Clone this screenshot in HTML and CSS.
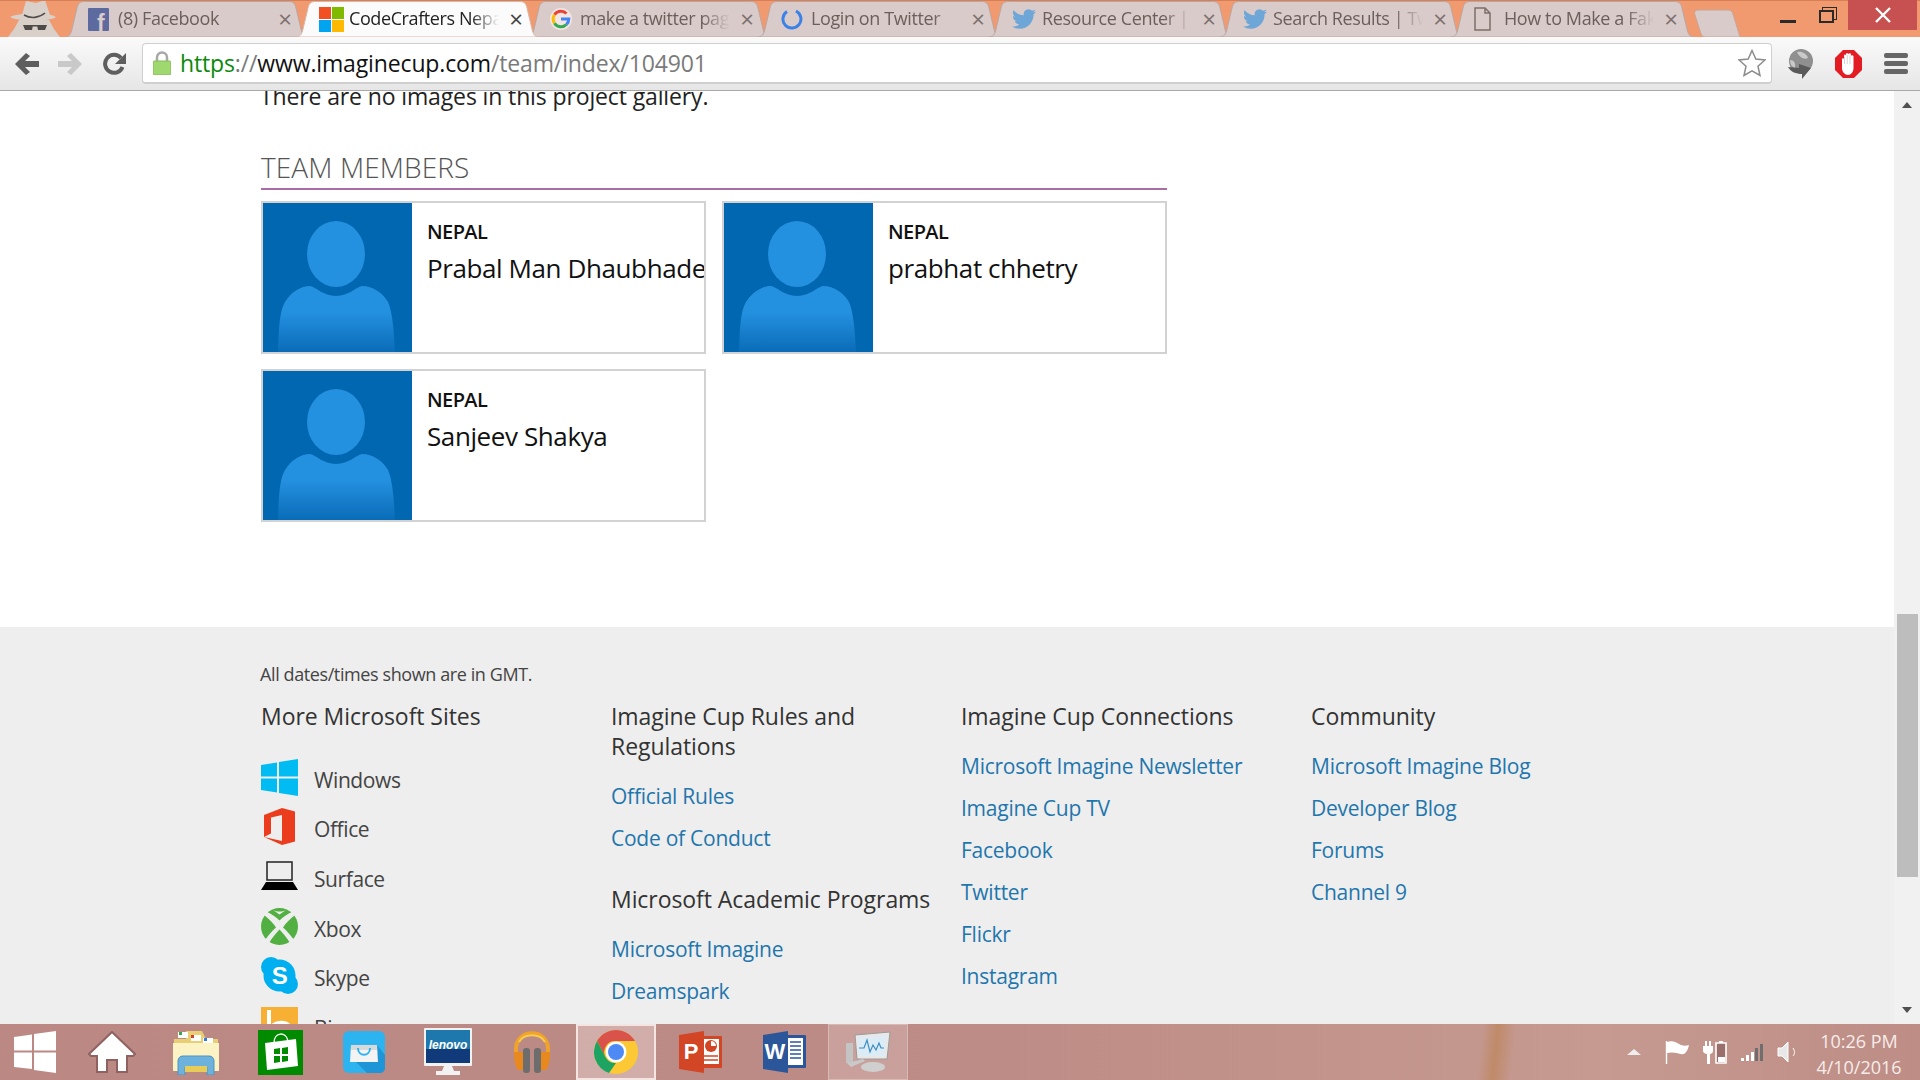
FILE: index.html
```html
<!DOCTYPE html>
<html lang="en">

<head>
    <meta charset="UTF-8">
    <title>CodeCrafters Nepal</title>
    <link rel="stylesheet" href="styles.css">
</head>

<body>
    <svg class="defs">
        <symbol id="tab-shape" viewBox="0 0 243 36">
            <path d="M0 36C4 36 6 33 7 28L12 7C13 2 15 .5 20 .5H223C228 .5 230 2 231 7L236 28C237 33 239 36 243 36Z"/>
        </symbol>
        <symbol id="bird" viewBox="0 0 24 24">
            <path fill="#6ea6d8" d="M23.95 4.57a10 10 0 01-2.82.78 4.96 4.96 0 002.16-2.73c-.95.56-2 .96-3.13 1.19a4.92 4.92 0 00-8.38 4.48C7.69 8.1 4.07 6.13 1.64 3.16a4.82 4.82 0 00-.67 2.48c0 1.71.87 3.21 2.19 4.1a4.9 4.9 0 01-2.23-.62v.06a4.92 4.92 0 003.95 4.83 5 5 0 01-2.21.08 4.94 4.94 0 004.6 3.42 9.87 9.87 0 01-6.1 2.1c-.39 0-.78-.02-1.17-.06a14 14 0 007.56 2.2c9.05 0 14-7.49 14-13.98 0-.21 0-.42-.02-.63A9.94 9.94 0 0024 4.59z"/>
        </symbol>
    </svg>

    <div class="screen">
        <header class="frame">
            <div class="spy">
                <svg width="54" height="37" viewBox="0 0 54 37">
                    <path fill="#d9d0ca" d="M15 15L19 1 29 3 38 0 43 15Z"/>
                    <path fill="#d9d0ca" d="M3 17C14 12 40 12 49 17 42 22 12 22 3 17Z"/>
                    <path fill="#d9d0ca" d="M12 20H42L47 29 53 37H1L7 29Z"/>
                    <path fill="#4e4a48" d="M16 25H26L25 30H18ZM30 25H40L38 30H31ZM25 25H31V26.500H25Z"/>
                    <path fill="none" stroke="#4e4a48" stroke-width="1.600" d="M17 15C24 19 32 18 38 13"/>
                </svg>
            </div>
            <div class="tabs">
                <div class="tab">
                    <svg class="tab-bg"><use href="#tab-shape"/></svg>
                    <svg class="favicon" width="21" height="23" viewBox="0 0 21 23">
                        <rect width="21" height="23" rx="1" fill="#5c6aa0"/>
                        <text class="fb-f" x="9" y="23">f</text>
                    </svg>
                    <span class="tab-title">(8) Facebook</span>
                    <span class="tab-close">×</span>
                </div>
                <div class="tab tab-active">
                    <svg class="tab-bg"><use href="#tab-shape"/></svg>
                    <svg class="favicon" width="25" height="25" viewBox="0 0 25 25">
                        <rect width="12" height="12" fill="#f25022"/>
                        <rect x="13" width="12" height="12" fill="#7fba00"/>
                        <rect y="13" width="12" height="12" fill="#00a4ef"/>
                        <rect x="13" y="13" width="12" height="12" fill="#ffb900"/>
                    </svg>
                    <span class="tab-title">CodeCrafters Nepal</span>
                    <span class="tab-close">×</span>
                </div>
                <div class="tab">
                    <svg class="tab-bg"><use href="#tab-shape"/></svg>
                    <svg class="favicon" width="22" height="22" viewBox="0 0 22 22">
                        <circle cx="11" cy="11" r="11" fill="#f3e6e2"/>
                        <path fill="none" stroke="#ea4335" stroke-width="3" d="M16.500 5.500A7.800 7.800 0 004.500 6.800"/>
                        <path fill="none" stroke="#fbbc05" stroke-width="3" d="M4.500 6.800A7.800 7.800 0 004.500 15.200"/>
                        <path fill="none" stroke="#34a853" stroke-width="3" d="M4.500 15.200A7.800 7.800 0 0016.500 16.500"/>
                        <path fill="none" stroke="#4285f4" stroke-width="3" d="M16.500 16.500A7.800 7.800 0 0018.800 11H11"/>
                    </svg>
                    <span class="tab-title">make a twitter page</span>
                    <span class="tab-close">×</span>
                </div>
                <div class="tab">
                    <svg class="tab-bg"><use href="#tab-shape"/></svg>
                    <svg class="favicon" width="22" height="22" viewBox="0 0 22 22">
                        <path fill="none" stroke="#3b82e8" stroke-width="3" d="M6 3.500A9 9 0 1 0 15 3"/>
                    </svg>
                    <span class="tab-title">Login on Twitter</span>
                    <span class="tab-close">×</span>
                </div>
                <div class="tab">
                    <svg class="tab-bg"><use href="#tab-shape"/></svg>
                    <svg class="favicon" width="24" height="24"><use href="#bird"/></svg>
                    <span class="tab-title">Resource Center | Twitter</span>
                    <span class="tab-close">×</span>
                </div>
                <div class="tab">
                    <svg class="tab-bg"><use href="#tab-shape"/></svg>
                    <svg class="favicon" width="24" height="24"><use href="#bird"/></svg>
                    <span class="tab-title">Search Results | Twitter</span>
                    <span class="tab-close">×</span>
                </div>
                <div class="tab">
                    <svg class="tab-bg"><use href="#tab-shape"/></svg>
                    <svg class="favicon" width="17" height="24" viewBox="0 0 17 24">
                        <path fill="none" stroke="#7d6f6a" stroke-width="1.500" d="M1 1H11L16 6V23H1ZM11 1V6H16"/>
                    </svg>
                    <span class="tab-title">How to Make a Fake</span>
                    <span class="tab-close">×</span>
                </div>
                <div class="new-tab">
                    <svg width="47" height="29" viewBox="0 0 47 29">
                        <path fill="#d9cbc9" stroke="#c9a596" d="M1 6C0 3 1 1 5 1H33C37 1 38 2 39 5L46 28H12C9 28 8 27 7 25Z"/>
                    </svg>
                </div>
            </div>
            <div class="win-btns">
                <span class="win-min"></span>
                <span class="win-restore"></span>
                <span class="win-close">
                    <svg width="16" height="16" viewBox="0 0 16 16">
                        <path stroke="#fff" stroke-width="2.400" d="M1 1L15 15M15 1L1 15"/>
                    </svg>
                </span>
            </div>
        </header>

        <div class="toolbar">
            <svg class="nav-btn nav-back" width="26" height="24" viewBox="0 0 26 24">
                <path fill="#5e5e5e" d="M12 1L16 4 11 9H25V15H11L16 20 12 23 1 12Z"/>
            </svg>
            <svg class="nav-btn nav-forward" width="26" height="24" viewBox="0 0 26 24">
                <path fill="#c9c9c9" d="M14 1L10 4 15 9H1V15H15L10 20 14 23 25 12Z"/>
            </svg>
            <svg class="nav-btn" width="24" height="24" viewBox="0 0 24 24">
                <path fill="none" stroke="#5e5e5e" stroke-width="4" d="M19.500 15A9 9 0 1 1 18 6"/>
                <path fill="#5e5e5e" d="M23 1V12H12Z"/>
            </svg>
            <div class="omnibox">
                <svg class="lock" width="18" height="24" viewBox="0 0 18 24">
                    <path fill="none" stroke="#a8a8a8" stroke-width="2.500" d="M4 11V6.500A5 5 0 0114 6.500V11"/>
                    <rect y="10" width="18" height="14" rx="1.500" fill="#9fd86f" stroke="#86bb5a"/>
                </svg>
                <span class="url"><span class="url-https">https</span><span class="url-dim">://</span>www.imaginecup.com<span class="url-dim">/team/index/104901</span></span>
                <svg width="28" height="28" viewBox="0 0 28 28">
                    <path fill="#fff" stroke="#8c8c8c" stroke-width="1.500" d="M14 1.500L17.800 10 27 11 20 17.200 22 26.500 14 21.800 6 26.500 8 17.200 1 11 10.200 10Z"/>
                </svg>
            </div>
            <svg class="ext-globe" width="30" height="30" viewBox="0 0 30 30">
                <circle cx="16" cy="12" r="12" fill="#8f8f8f"/>
                <path fill="#c9c9c9" d="M12 3C17 2 22 5 23 9 19 11 14 8 12 3ZM5 11C9 11 11 14 10 19 7 18 5 15 5 11Z"/>
                <path fill="#5a5a5a" d="M3 18L14 19V15L26 19 17 30V25C11 25 6 23 3 18Z"/>
            </svg>
            <svg class="ext-block" width="27" height="28" viewBox="0 0 27 28">
                <path fill="#e31b23" d="M8 0H19L27 8V20L19 28H8L0 20V8Z"/>
                <path fill="#fff" d="M7 9C7 8 9 8 9 9V6C9 4 11 4 11 6V4C11 3 13.500 3 13.500 4.500V4C13.500 3 16 3 16 4.500V6C16 5 18.500 5 18.500 6.500V18C18.500 22 16 25 13 25 10 25 7 22 7 18Z"/>
                <path stroke="#c9c9c9" stroke-width="0.800" d="M9.500 7V14M12.300 5V14M15 5V14"/>
            </svg>
            <div class="menu-btn"><span></span><span></span><span></span></div>
        </div>

        <div class="viewport">
            <main class="page">
                <section class="content">
                    <p class="gallery-note">There are no images in this project gallery.</p>
                    <h2 class="section-title">TEAM MEMBERS</h2>
                    <div class="members">
                        <div class="member">
                            <svg class="avatar" viewBox="0 0 149 149">
                                <defs>
                                    <linearGradient id="body-fade" x1="0" y1="0" x2="0" y2="1">
                                        <stop offset="0.400" stop-color="#2490e0"/>
                                        <stop offset="1" stop-color="#0a6cb8"/>
                                    </linearGradient>
                                </defs>
                                <ellipse cx="73" cy="51" rx="29" ry="33" fill="#2490e0"/>
                                <path fill="url(#body-fade)" d="M15 149C16 120 17 108 22 99 28 89 38 83 47 83 53 84 60 93 73 93 86 93 93 84 99 83 110 83 120 90 125 99 129 108 131 125 132 149Z"/>
                            </svg>
                            <div class="member-info">
                                <div class="member-country">NEPAL</div>
                                <div class="member-name">Prabal Man Dhaubhade</div>
                            </div>
                        </div>
                        <div class="member">
                            <svg class="avatar" viewBox="0 0 149 149">
                                <ellipse cx="73" cy="51" rx="29" ry="33" fill="#2490e0"/>
                                <path fill="url(#body-fade)" d="M15 149C16 120 17 108 22 99 28 89 38 83 47 83 53 84 60 93 73 93 86 93 93 84 99 83 110 83 120 90 125 99 129 108 131 125 132 149Z"/>
                            </svg>
                            <div class="member-info">
                                <div class="member-country">NEPAL</div>
                                <div class="member-name">prabhat chhetry</div>
                            </div>
                        </div>
                        <div class="member">
                            <svg class="avatar" viewBox="0 0 149 149">
                                <ellipse cx="73" cy="51" rx="29" ry="33" fill="#2490e0"/>
                                <path fill="url(#body-fade)" d="M15 149C16 120 17 108 22 99 28 89 38 83 47 83 53 84 60 93 73 93 86 93 93 84 99 83 110 83 120 90 125 99 129 108 131 125 132 149Z"/>
                            </svg>
                            <div class="member-info">
                                <div class="member-country">NEPAL</div>
                                <div class="member-name">Sanjeev Shakya</div>
                            </div>
                        </div>
                    </div>
                </section>

                <footer class="site-footer">
                    <p class="tz-note">All dates/times shown are in GMT.</p>
                    <div class="footer-cols">
                        <div class="footer-col">
                            <h3>More Microsoft Sites</h3>
                            <ul class="site-list">
                                <li>
                                    <svg width="37" height="37" viewBox="0 0 37 37">
                                        <path fill="#00bcf2" d="M0 6L16 3.500V17.500H0ZM18 3L37 0V17.500H18ZM0 19.500H16V33.500L0 31ZM18 19.500H37V37L18 34Z"/>
                                    </svg>
                                    Windows
                                </li>
                                <li>
                                    <svg width="37" height="37" viewBox="0 0 37 37">
                                        <path fill="#eb3c1e" fill-rule="evenodd" d="M3 29V7L21 0 34 3.500V33.500L21 37 3 29ZM21 33V7L10 9.500V25.500L3 29Z"/>
                                    </svg>
                                    Office
                                </li>
                                <li>
                                    <svg width="37" height="30" viewBox="0 0 37 30">
                                        <rect x="6" y="1" width="25" height="18" fill="none" stroke="#222" stroke-width="1.500"/>
                                        <path fill="#000" d="M5 21H32L37 29H0Z"/>
                                    </svg>
                                    Surface
                                </li>
                                <li>
                                    <svg width="37" height="37" viewBox="0 0 37 37">
                                        <circle cx="18.500" cy="18.500" r="18.500" fill="#52b043"/>
                                        <path fill="#eeeeee" d="M5 3.500C11 6 15 9 18.500 12.500 22 9 26 6 32 3.500L34 7C28 12 24 16 22 19.500 26 23 30 28 33 32L29 35C26 30 22 25 18.500 21.500 15 25 11 30 8 35L4 32C7 28 11 23 15 19.500 13 16 9 12 3 7Z"/>
                                        <path fill="#eeeeee" d="M12 2C16 4 21 4 25 2L18.500 6.500Z"/>
                                    </svg>
                                    Xbox
                                </li>
                                <li>
                                    <svg width="37" height="37" viewBox="0 0 37 37">
                                        <circle cx="10" cy="10" r="10" fill="#00aff0"/>
                                        <circle cx="27" cy="27" r="10" fill="#00aff0"/>
                                        <circle cx="18.500" cy="18.500" r="16" fill="#00aff0"/>
                                        <text class="skype-s" x="18.500" y="27">S</text>
                                    </svg>
                                    Skype
                                </li>
                                <li>
                                    <svg width="37" height="37" viewBox="0 0 37 37">
                                        <rect width="37" height="37" fill="#f7b033"/>
                                        <path fill="none" stroke="#fff" stroke-width="4" d="M8 3V24C14 12 30 14 30 24"/>
                                    </svg>
                                    Bing
                                </li>
                            </ul>
                        </div>
                        <div class="footer-col">
                            <h3>Imagine Cup Rules and Regulations</h3>
                            <ul class="link-list">
                                <li><a href="#">Official Rules</a></li>
                                <li><a href="#">Code of Conduct</a></li>
                            </ul>
                            <h3 class="footer-sub">Microsoft Academic Programs</h3>
                            <ul class="link-list">
                                <li><a href="#">Microsoft Imagine</a></li>
                                <li><a href="#">Dreamspark</a></li>
                            </ul>
                        </div>
                        <div class="footer-col">
                            <h3>Imagine Cup Connections</h3>
                            <ul class="link-list">
                                <li><a href="#">Microsoft Imagine Newsletter</a></li>
                                <li><a href="#">Imagine Cup TV</a></li>
                                <li><a href="#">Facebook</a></li>
                                <li><a href="#">Twitter</a></li>
                                <li><a href="#">Flickr</a></li>
                                <li><a href="#">Instagram</a></li>
                            </ul>
                        </div>
                        <div class="footer-col">
                            <h3>Community</h3>
                            <ul class="link-list">
                                <li><a href="#">Microsoft Imagine Blog</a></li>
                                <li><a href="#">Developer Blog</a></li>
                                <li><a href="#">Forums</a></li>
                                <li><a href="#">Channel 9</a></li>
                            </ul>
                        </div>
                    </div>
                </footer>
            </main>
            <div class="scrollbar">
                <span class="arrow-up"></span>
                <span class="thumb"></span>
                <span class="arrow-down"></span>
            </div>
        </div>

        <div class="taskbar">
            <div class="task-start">
                <svg width="42" height="42" viewBox="0 0 42 42">
                    <path fill="#fff" d="M0 6L18 3.500V19.500H0ZM20 3L42 0V19.500H20ZM0 21.500H18V38L0 36ZM20 21.500H42V42L20 39Z"/>
                </svg>
            </div>
            <div class="task-slot">
                <svg width="48" height="42" viewBox="0 0 48 42">
                    <path fill="#fff" stroke="#8e6260" stroke-width="2" d="M24 1L47 23 45 25H39V41H29V29H19V41H9V25H3L1 23Z"/>
                </svg>
            </div>
            <div class="task-slot">
                <svg width="48" height="46" viewBox="0 0 48 46">
                    <path fill="#e8cf76" d="M2 10H14V2H30L34 10H46V40H2Z"/>
                    <path fill="#fbf3c4" d="M1 14H47V42H1Z"/>
                    <rect x="6" y="3" width="10" height="6" fill="#fff"/>
                    <rect x="19" y="6" width="10" height="6" fill="#fff"/>
                    <rect x="31" y="9" width="10" height="5" fill="#fff"/>
                    <rect x="7" y="3" width="3" height="3" fill="#3aa64a"/>
                    <rect x="19" y="6" width="3" height="3" fill="#d84032"/>
                    <rect x="32" y="9" width="3" height="3" fill="#2f7fd8"/>
                    <path fill="#6cb2dc" stroke="#4c93c2" d="M6 46V32C6 29 8 27 11 27H37C40 27 42 29 42 32V46H35V38H13V46Z"/>
                    <rect x="13" y="37" width="22" height="6" fill="#e7cc58"/>
                </svg>
            </div>
            <div class="task-slot">
                <svg width="45" height="45" viewBox="0 0 45 45">
                    <rect width="45" height="45" fill="#008a00"/>
                    <path fill="#fff" d="M7 13L38 9 40 36 9 40Z"/>
                    <path fill="none" stroke="#fff" stroke-width="1.500" d="M16 13C16 2 28 1 30 11"/>
                    <path fill="#008a00" d="M16 19L22 18V24H16ZM24 18L30 17V24H24ZM16 26H22V32L16 33ZM24 26H30V31L24 32Z"/>
                </svg>
            </div>
            <div class="task-slot">
                <svg width="42" height="42" viewBox="0 0 42 42">
                    <rect width="42" height="42" rx="6" fill="#2db4f0"/>
                    <path fill="#1d95d6" d="M34 14L42 24V36C42 40 40 42 36 42H24L8 26Z"/>
                    <path fill="#f3f3f3" d="M8 14H34L35 31H7Z"/>
                    <path fill="#d9d9d9" d="M8 14H34V19H8Z"/>
                    <path fill="none" stroke="#2db4f0" stroke-width="2" d="M15 17C15 26 27 26 27 17"/>
                </svg>
            </div>
            <div class="task-slot">
                <svg width="48" height="48" viewBox="0 0 48 48">
                    <rect width="48" height="38" rx="1" fill="#f2f2f2"/>
                    <rect x="2" y="2" width="44" height="33" fill="#103a7a"/>
                    <rect x="2" y="2" width="44" height="19" fill="#1f78ad"/>
                    <text class="lenovo" x="24" y="21">lenovo</text>
                    <path fill="#f2f2f2" d="M20 38H28L30 43H36V47H12V43H18Z"/>
                </svg>
            </div>
            <div class="task-slot">
                <svg width="40" height="44" viewBox="0 0 40 44">
                    <path fill="none" stroke="#f0a32a" stroke-width="4" d="M4 28V19C4 -2 36 -2 36 19V28"/>
                    <path fill="none" stroke="#f7cc4f" stroke-width="2" d="M7 12C12 3 28 3 33 12"/>
                    <path fill="#e8891f" d="M2 22H11V40H6C3 36 2 30 2 22ZM38 22H29V40H34C37 36 38 30 38 22Z"/>
                    <rect x="11" y="18" width="7" height="25" rx="3" fill="#6d6d6d"/>
                    <rect x="22" y="18" width="7" height="25" rx="3" fill="#6d6d6d"/>
                </svg>
            </div>
            <div class="task-slot task-open">
                <svg width="44" height="44" viewBox="0 0 44 44">
                    <circle cx="22" cy="22" r="22" fill="#fcc934"/>
                    <path fill="#d9534a" d="M3 11A22 22 0 0141 11H22A11 11 0 0012 28Z"/>
                    <path fill="#1da462" d="M3 11L12 28A11 11 0 0022 33L15 43A22 22 0 013 11Z"/>
                    <circle cx="22" cy="22" r="10.500" fill="#fff"/>
                    <circle cx="22" cy="22" r="8" fill="#4e8af4"/>
                </svg>
            </div>
            <div class="task-slot">
                <svg width="43" height="42" viewBox="0 0 43 42">
                    <rect x="22" y="5" width="21" height="32" rx="1" fill="#d24625"/>
                    <rect x="24" y="8" width="16" height="25" fill="#fff"/>
                    <circle cx="32" cy="15" r="6" fill="#d24625"/>
                    <path fill="#fff" d="M32 10V15H37A5 5 0 0032 10Z"/>
                    <path stroke="#d24625" stroke-width="1.500" d="M25 25H39M25 29H39"/>
                    <path fill="#d24625" d="M0 4L25 0V42L0 38Z"/>
                    <text class="office-letter" x="12" y="28">P</text>
                </svg>
            </div>
            <div class="task-slot">
                <svg width="43" height="42" viewBox="0 0 43 42">
                    <rect x="22" y="4" width="21" height="33" rx="1" fill="#2b579a"/>
                    <rect x="24" y="7" width="16" height="27" fill="#fff"/>
                    <path stroke="#2b579a" stroke-width="1.500" d="M27 11H38M27 15H38M27 19H38M27 23H38M27 27H38"/>
                    <path fill="#2b579a" d="M0 4L25 0V42L0 38Z"/>
                    <text class="office-letter" x="12" y="28">W</text>
                </svg>
            </div>
            <div class="task-slot task-open task-open-dim">
                <svg width="46" height="42" viewBox="0 0 46 42">
                    <rect x="1" y="12" width="7" height="20" fill="#c4c4c4"/>
                    <path fill="#e8e8e8" stroke="#9a9a9a" d="M10 4L45 1 42 28 12 28Z"/>
                    <path fill="#dcecf6" d="M13 7L41 5 39 25 14 25Z"/>
                    <path fill="none" stroke="#3c8dc4" stroke-width="1.200" d="M14 17H19L22 9 25 21 28 14 31 19 34 12 36 17H39"/>
                    <ellipse cx="28" cy="36" rx="12" ry="5" fill="#cfcfcf"/>
                    <path fill="#c9c9c9" d="M2 32L18 28 20 30 6 36Z"/>
                </svg>
            </div>
            <div class="tray">
                <span class="tray-chevron"></span>
                <svg width="24" height="24" viewBox="0 0 24 24">
                    <path fill="none" stroke="#fff" stroke-width="1.400" d="M1.500 24V1"/>
                    <path fill="#fff" d="M2 2C8 0 12 3 16 5 19 6 21 6 24 5 23 9 22 12 19 14 15 15 10 11 2 13Z"/>
                </svg>
                <svg width="24" height="24" viewBox="0 0 24 24">
                    <path fill="#fff" d="M2 1H4V6H6V1H8V6H10V11C10 13 8 14 7 14V24H4V14C3 14 0 13 0 11V6H2Z"/>
                    <path fill="#9a6e6a" stroke="#fff" stroke-width="1.600" d="M13 3H23V23H13Z"/>
                    <rect x="15" y="17" width="7" height="5" fill="#fff"/>
                    <rect x="16" y="1" width="4" height="2" fill="#fff"/>
                </svg>
                <svg width="22" height="18" viewBox="0 0 22 18">
                    <path fill="#fff" d="M0 15H3V18H0ZM5 12H8V18H5ZM10 9H13V18H10Z"/>
                    <path fill="#6e6e6e" d="M14 5H17V18H14Z"/>
                    <path fill="#6e6e6e" d="M19 1H22V18H19Z"/>
                </svg>
                <svg width="20" height="22" viewBox="0 0 20 22">
                    <path fill="#e8e8e8" stroke="#fff" d="M1 7H5L11 1V21L5 15H1Z"/>
                    <path fill="none" stroke="#fff" d="M16 7C18 10 18 13 16 15"/>
                </svg>
                <div class="clock">
                    <span>10:26 PM</span>
                    <span>4/10/2016</span>
                </div>
            </div>
        </div>
    </div>
</body>

</html>
```

FILE: styles.css
```css
* {
    box-sizing: border-box;
}

body {
    margin: 0;
    font-family: "Open Sans", "Noto Sans", Arial, sans-serif;
    background-color: #fff;
    color: #222;
}

.defs {
    display: none;
}

.screen {
    width: 1920px;
    height: 1080px;
    display: flex;
    flex-direction: column;
    overflow: hidden;
}

/* browser window top */
.frame {
    height: 37px;
    flex: none;
    display: flex;
    background-color: #f1996f;
    border-top: 1px solid #d77f56;
    overflow: hidden;
}

.spy {
    width: 65px;
    flex: none;
    padding-left: 7px;
    margin-top: -1px;
}

.tabs {
    flex: 1;
    display: flex;
    align-items: flex-start;
}

.tab {
    width: 243px;
    height: 36px;
    flex: none;
    margin-right: -12px;
    position: relative;
    display: flex;
    align-items: center;
    padding-left: 23px;
}

.tab-bg {
    position: absolute;
    left: 0;
    top: 0;
    width: 243px;
    height: 36px;
    fill: #d9cbc9;
    stroke: #bca6a0;
    stroke-width: 1;
}

.tab-active {
    z-index: 2;
}

.tab-active .tab-bg {
    fill: #fbfbfb;
    stroke: #d9b7a6;
}

.favicon {
    position: relative;
    flex: none;
}

.tab-title {
    position: absolute;
    left: 53px;
    top: 5px;
    width: 150px;
    white-space: nowrap;
    overflow: hidden;
    font-size: 18px;
    letter-spacing: -0.4px;
    color: #6b5f5c;
    mask-image: linear-gradient(to right, #000 122px, transparent 150px);
}

.tab-active .tab-title {
    color: #222;
}

.tab-close {
    position: absolute;
    left: 212px;
    width: 16px;
    text-align: center;
    font-size: 24px;
    line-height: 24px;
    color: #7d7270;
}

.tab-active .tab-close {
    color: #444;
}

.fb-f {
    font-family: "Liberation Sans", sans-serif;
    font-weight: bold;
    font-size: 23px;
    fill: #d9cbc9;
}

.new-tab {
    flex: none;
    margin: 8px 0 0 12px;
    height: 29px;
}

.win-btns {
    position: absolute;
    top: 0;
    right: 3px;
    display: flex;
    align-items: flex-start;
}

.win-min {
    width: 16px;
    height: 3px;
    margin: 20px 23px 0 0;
    background-color: #2a2a2a;
}

.win-restore {
    width: 15px;
    height: 13px;
    margin: 10px 14px 0 0;
    border: 2px solid #2a2a2a;
    box-shadow: 3px -3px 0 -1px #f1996f, 3px -3px 0 0 #2a2a2a;
}

.win-close {
    width: 69px;
    height: 30px;
    display: flex;
    align-items: center;
    justify-content: center;
    background-color: #c75050;
}

/* address bar row */
.toolbar {
    height: 54px;
    flex: none;
    display: flex;
    align-items: center;
    padding: 0 12px 0 14px;
    background: linear-gradient(#fafafa, #e6e6e6);
    border-bottom: 1px solid #a9a9a9;
}

.nav-btn {
    flex: none;
    margin-right: 15px;
}

.nav-back {
    margin-right: 17px;
}

.nav-forward {
    margin-right: 20px;
}

.omnibox {
    width: 1630px;
    height: 41px;
    flex: none;
    margin-right: 13px;
    display: flex;
    align-items: center;
    padding: 0 5px 0 10px;
    background-color: #fff;
    border: 1px solid #cfcfcf;
    border-bottom-width: 2px;
    border-radius: 4px;
}

.lock {
    flex: none;
}

.url {
    flex: 1;
    margin-left: 9px;
    font-size: 23px;
    letter-spacing: -0.14px;
    color: #111;
    white-space: nowrap;
}

.url-https {
    color: #0a8a0a;
}

.url-dim {
    color: #7a7a7a;
}

.ext-globe {
    flex: none;
}

.ext-block {
    flex: none;
    margin-left: 20px;
}

.menu-btn {
    margin-left: 22px;
    width: 24px;
    display: flex;
    flex-direction: column;
    gap: 3px;
}

.menu-btn span {
    height: 5px;
    border-radius: 2px;
    background-color: #666;
}

/* page area */
.viewport {
    flex: 1;
    min-height: 0;
    display: flex;
}

.page {
    flex: 1;
    min-width: 0;
    overflow: hidden;
    display: flex;
    flex-direction: column;
}

.content {
    height: 536px;
    flex: none;
    padding-left: 261px;
}

.gallery-note {
    margin: -10px 0 0 -1px;
    font-size: 23px;
    line-height: 30px;
    letter-spacing: -0.13px;
    color: #222;
}

.section-title {
    width: 906px;
    height: 40px;
    margin: 39px 0 0 0;
    font-size: 28px;
    line-height: 35px;
    font-weight: 300;
    letter-spacing: 0.1px;
    color: #555;
    border-bottom: 2px solid #a86ca6;
}

.members {
    display: grid;
    grid-template-columns: 445px 445px;
    column-gap: 16px;
    row-gap: 15px;
    margin-top: 11px;
}

.member {
    height: 153px;
    display: flex;
    border: 2px solid #d2d2d2;
    background-color: #fff;
    overflow: hidden;
}

.avatar {
    width: 149px;
    height: 149px;
    flex: none;
    background-color: #0067b0;
}

.member-info {
    padding: 15px 0 0 15px;
    min-width: 0;
    white-space: nowrap;
}

.member-country {
    font-size: 20px;
    line-height: 28px;
    font-weight: 600;
    letter-spacing: -0.6px;
    color: #111;
}

.member-name {
    margin-top: 4px;
    font-size: 26px;
    line-height: 36px;
    letter-spacing: -0.4px;
    color: #111;
}

/* footer */
.site-footer {
    flex: 1;
    padding: 35px 0 0 261px;
    background-color: #eee;
}

.tz-note {
    margin: 0 0 0 -1px;
    font-size: 18px;
    line-height: 24px;
    letter-spacing: -0.4px;
    color: #444;
}

.footer-cols {
    display: grid;
    grid-template-columns: repeat(4, 350px);
    margin-top: 15px;
}

.footer-col {
    min-width: 0;
}

.footer-col h3 {
    width: 310px;
    margin: 0;
    font-size: 23px;
    line-height: 30px;
    font-weight: 400;
    letter-spacing: -0.06px;
    color: #333;
}

.footer-col h3.footer-sub {
    width: 340px;
    margin-top: 25px;
}

.link-list {
    list-style: none;
    margin: 14px 0 0 0;
    padding: 0;
}

.link-list li {
    height: 42px;
    font-size: 21px;
    line-height: 42px;
    letter-spacing: -0.25px;
}

.link-list a {
    color: #1f76ad;
    text-decoration: none;
}

.site-list {
    list-style: none;
    margin: 24px 0 0 0;
    padding: 0;
}

.site-list li {
    height: 49.6px;
    display: flex;
    align-items: center;
    font-size: 21px;
    letter-spacing: -0.4px;
    color: #444;
}

.site-list svg {
    flex: none;
    margin: 0 16px 5px 0;
}

.skype-s {
    font-family: "Liberation Sans", sans-serif;
    font-weight: bold;
    font-size: 24px;
    fill: #fff;
    text-anchor: middle;
}

/* fake scrollbar */
.scrollbar {
    width: 26px;
    flex: none;
    display: flex;
    flex-direction: column;
    align-items: center;
    background-color: #f1f1f1;
    padding-top: 11px;
}

.arrow-up {
    border: 5px solid transparent;
    border-top: 0;
    border-bottom: 6px solid #505050;
}

.thumb {
    width: 21px;
    height: 263px;
    margin-top: 506px;
    background-color: #bdbdbd;
}

.arrow-down {
    border: 5px solid transparent;
    border-bottom: 0;
    border-top: 6px solid #505050;
    margin-top: 130px;
}

/* windows taskbar */
.taskbar {
    height: 56px;
    flex: none;
    display: flex;
    align-items: stretch;
    background: linear-gradient(96deg, transparent 1475px, #bf8a68 1490px, transparent 1508px),
        linear-gradient(to right, #bb8883, #bd8c86 1000px, #c69a90 1600px, #bd8d86);
}

.task-start {
    width: 70px;
    flex: none;
    display: flex;
    align-items: center;
    justify-content: center;
}

.task-slot {
    width: 84px;
    flex: none;
    display: flex;
    align-items: center;
    justify-content: center;
}

.task-open {
    width: 80px;
    margin: 0 2px;
    border: 2px solid #f4e4e2;
    background-color: rgba(255, 255, 255, 0.3);
}

.task-open-dim {
    border: 1px solid #d9b9b4;
    background-color: rgba(255, 255, 255, 0.18);
}

.lenovo {
    font-family: "Liberation Sans", sans-serif;
    font-style: italic;
    font-weight: bold;
    font-size: 12px;
    fill: #fff;
    text-anchor: middle;
}

.office-letter {
    font-family: "Liberation Sans", sans-serif;
    font-weight: bold;
    font-size: 22px;
    fill: #fff;
    text-anchor: middle;
}

.tray {
    flex: 1;
    display: flex;
    align-items: center;
    justify-content: flex-end;
    gap: 14px;
    padding-right: 15px;
}

.tray-chevron {
    border: 7px solid transparent;
    border-top: 0;
    border-bottom: 6px solid #eee;
    margin-right: 10px;
}

.clock {
    width: 92px;
    margin: 4px 0 0 2px;
    display: flex;
    flex-direction: column;
    align-items: center;
    font-size: 18px;
    line-height: 26px;
    color: #f7ecea;
}
```
